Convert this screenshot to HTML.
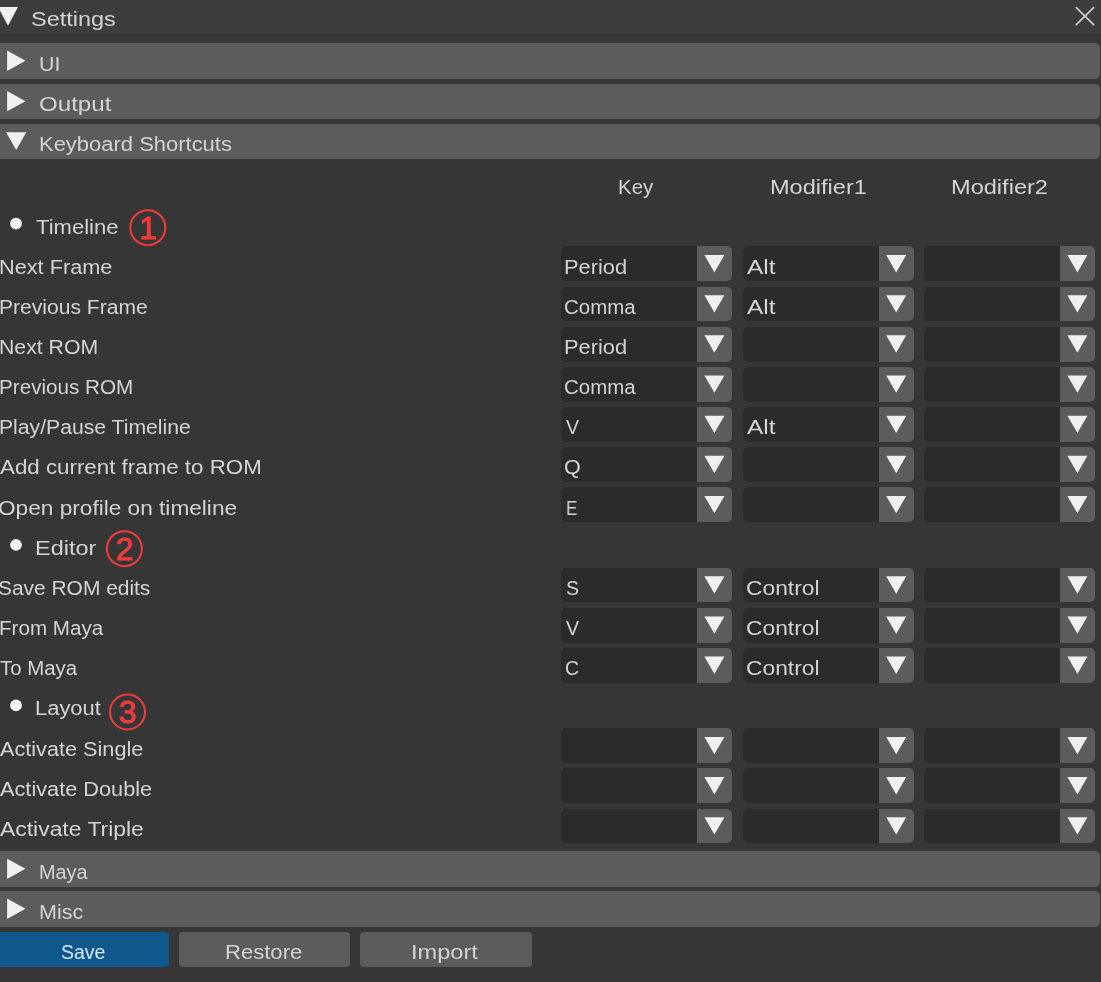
<!DOCTYPE html><html><head><meta charset="utf-8"><style>
html,body{margin:0;padding:0;}
body{width:1101px;height:982px;position:relative;overflow:hidden;background:#363636;font-family:"Liberation Sans",sans-serif;font-size:19.5px;}
.a{position:absolute;}
.t{position:absolute;white-space:pre;will-change:transform;line-height:60px;height:60px;transform-origin:0 0;}
.hd{position:absolute;left:-10px;width:1110px;height:36px;background:#5c5c5c;border-radius:5px;}
.cb{position:absolute;width:171.2px;height:34.8px;background:#2b2b2b;border-radius:5px;}
.cbb{position:absolute;width:35.4px;height:34.8px;background:#5c5c5c;border-radius:0 5px 5px 0;}
.bt{position:absolute;height:35px;background:#5c5c5c;border-radius:4px;}
</style></head><body>

<div class='a' style='left:0;top:0;width:1101px;height:33.3px;background:#3d3d3d'></div>
<div class='hd' style='top:42.8px;height:35.9px'></div>
<div class='hd' style='top:83.5px;height:35.4px'></div>
<div class='hd' style='top:123.8px;height:35.0px'></div>
<div class='hd' style='top:851.0px;height:35.7px'></div>
<div class='hd' style='top:890.9px;height:35.7px'></div>
<div class='cb' style='left:560.9px;top:246.40px'></div>
<div class='cbb' style='left:696.70px;top:246.40px'></div>
<div class='cb' style='left:742.7px;top:246.40px'></div>
<div class='cbb' style='left:878.50px;top:246.40px'></div>
<div class='cb' style='left:923.9px;top:246.40px'></div>
<div class='cbb' style='left:1059.70px;top:246.40px'></div>
<div class='cb' style='left:560.9px;top:286.56px'></div>
<div class='cbb' style='left:696.70px;top:286.56px'></div>
<div class='cb' style='left:742.7px;top:286.56px'></div>
<div class='cbb' style='left:878.50px;top:286.56px'></div>
<div class='cb' style='left:923.9px;top:286.56px'></div>
<div class='cbb' style='left:1059.70px;top:286.56px'></div>
<div class='cb' style='left:560.9px;top:326.71px'></div>
<div class='cbb' style='left:696.70px;top:326.71px'></div>
<div class='cb' style='left:742.7px;top:326.71px'></div>
<div class='cbb' style='left:878.50px;top:326.71px'></div>
<div class='cb' style='left:923.9px;top:326.71px'></div>
<div class='cbb' style='left:1059.70px;top:326.71px'></div>
<div class='cb' style='left:560.9px;top:366.87px'></div>
<div class='cbb' style='left:696.70px;top:366.87px'></div>
<div class='cb' style='left:742.7px;top:366.87px'></div>
<div class='cbb' style='left:878.50px;top:366.87px'></div>
<div class='cb' style='left:923.9px;top:366.87px'></div>
<div class='cbb' style='left:1059.70px;top:366.87px'></div>
<div class='cb' style='left:560.9px;top:407.03px'></div>
<div class='cbb' style='left:696.70px;top:407.03px'></div>
<div class='cb' style='left:742.7px;top:407.03px'></div>
<div class='cbb' style='left:878.50px;top:407.03px'></div>
<div class='cb' style='left:923.9px;top:407.03px'></div>
<div class='cbb' style='left:1059.70px;top:407.03px'></div>
<div class='cb' style='left:560.9px;top:447.18px'></div>
<div class='cbb' style='left:696.70px;top:447.18px'></div>
<div class='cb' style='left:742.7px;top:447.18px'></div>
<div class='cbb' style='left:878.50px;top:447.18px'></div>
<div class='cb' style='left:923.9px;top:447.18px'></div>
<div class='cbb' style='left:1059.70px;top:447.18px'></div>
<div class='cb' style='left:560.9px;top:487.34px'></div>
<div class='cbb' style='left:696.70px;top:487.34px'></div>
<div class='cb' style='left:742.7px;top:487.34px'></div>
<div class='cbb' style='left:878.50px;top:487.34px'></div>
<div class='cb' style='left:923.9px;top:487.34px'></div>
<div class='cbb' style='left:1059.70px;top:487.34px'></div>
<div class='cb' style='left:560.9px;top:567.66px'></div>
<div class='cbb' style='left:696.70px;top:567.66px'></div>
<div class='cb' style='left:742.7px;top:567.66px'></div>
<div class='cbb' style='left:878.50px;top:567.66px'></div>
<div class='cb' style='left:923.9px;top:567.66px'></div>
<div class='cbb' style='left:1059.70px;top:567.66px'></div>
<div class='cb' style='left:560.9px;top:607.81px'></div>
<div class='cbb' style='left:696.70px;top:607.81px'></div>
<div class='cb' style='left:742.7px;top:607.81px'></div>
<div class='cbb' style='left:878.50px;top:607.81px'></div>
<div class='cb' style='left:923.9px;top:607.81px'></div>
<div class='cbb' style='left:1059.70px;top:607.81px'></div>
<div class='cb' style='left:560.9px;top:647.97px'></div>
<div class='cbb' style='left:696.70px;top:647.97px'></div>
<div class='cb' style='left:742.7px;top:647.97px'></div>
<div class='cbb' style='left:878.50px;top:647.97px'></div>
<div class='cb' style='left:923.9px;top:647.97px'></div>
<div class='cbb' style='left:1059.70px;top:647.97px'></div>
<div class='cb' style='left:560.9px;top:728.28px'></div>
<div class='cbb' style='left:696.70px;top:728.28px'></div>
<div class='cb' style='left:742.7px;top:728.28px'></div>
<div class='cbb' style='left:878.50px;top:728.28px'></div>
<div class='cb' style='left:923.9px;top:728.28px'></div>
<div class='cbb' style='left:1059.70px;top:728.28px'></div>
<div class='cb' style='left:560.9px;top:768.44px'></div>
<div class='cbb' style='left:696.70px;top:768.44px'></div>
<div class='cb' style='left:742.7px;top:768.44px'></div>
<div class='cbb' style='left:878.50px;top:768.44px'></div>
<div class='cb' style='left:923.9px;top:768.44px'></div>
<div class='cbb' style='left:1059.70px;top:768.44px'></div>
<div class='cb' style='left:560.9px;top:808.60px'></div>
<div class='cbb' style='left:696.70px;top:808.60px'></div>
<div class='cb' style='left:742.7px;top:808.60px'></div>
<div class='cbb' style='left:878.50px;top:808.60px'></div>
<div class='cb' style='left:923.9px;top:808.60px'></div>
<div class='cbb' style='left:1059.70px;top:808.60px'></div>
<div class='bt' style='left:-4px;width:173.4px;top:931.8px;background:#10588c'></div>
<div class='bt' style='left:178.7px;width:171.6px;top:931.8px'></div>
<div class='bt' style='left:360.3px;width:171.3px;top:931.8px'></div>
<svg class='a' style='left:0;top:0' width='1101' height='982'><polygon points='-2,7 18,7 8,25.7' fill='#f0f0f0'/><polygon points='7.1,50.60 25.5,60.75 7.1,70.90' fill='#f0f0f0'/><polygon points='7.1,91.05 25.5,101.20 7.1,111.35' fill='#f0f0f0'/><polygon points='6.1,132.30 26.3,132.30 16.2,150.10' fill='#f0f0f0'/><polygon points='7.1,858.70 25.5,868.85 7.1,879.00' fill='#f0f0f0'/><polygon points='7.1,898.60 25.5,908.75 7.1,918.90' fill='#f0f0f0'/><polygon points='704.40,255.00 724.40,255.00 714.40,272.40' fill='#f0f0f0'/><polygon points='886.20,255.00 906.20,255.00 896.20,272.40' fill='#f0f0f0'/><polygon points='1067.40,255.00 1087.40,255.00 1077.40,272.40' fill='#f0f0f0'/><polygon points='704.40,295.16 724.40,295.16 714.40,312.56' fill='#f0f0f0'/><polygon points='886.20,295.16 906.20,295.16 896.20,312.56' fill='#f0f0f0'/><polygon points='1067.40,295.16 1087.40,295.16 1077.40,312.56' fill='#f0f0f0'/><polygon points='704.40,335.31 724.40,335.31 714.40,352.71' fill='#f0f0f0'/><polygon points='886.20,335.31 906.20,335.31 896.20,352.71' fill='#f0f0f0'/><polygon points='1067.40,335.31 1087.40,335.31 1077.40,352.71' fill='#f0f0f0'/><polygon points='704.40,375.47 724.40,375.47 714.40,392.87' fill='#f0f0f0'/><polygon points='886.20,375.47 906.20,375.47 896.20,392.87' fill='#f0f0f0'/><polygon points='1067.40,375.47 1087.40,375.47 1077.40,392.87' fill='#f0f0f0'/><polygon points='704.40,415.63 724.40,415.63 714.40,433.03' fill='#f0f0f0'/><polygon points='886.20,415.63 906.20,415.63 896.20,433.03' fill='#f0f0f0'/><polygon points='1067.40,415.63 1087.40,415.63 1077.40,433.03' fill='#f0f0f0'/><polygon points='704.40,455.78 724.40,455.78 714.40,473.18' fill='#f0f0f0'/><polygon points='886.20,455.78 906.20,455.78 896.20,473.18' fill='#f0f0f0'/><polygon points='1067.40,455.78 1087.40,455.78 1077.40,473.18' fill='#f0f0f0'/><polygon points='704.40,495.94 724.40,495.94 714.40,513.34' fill='#f0f0f0'/><polygon points='886.20,495.94 906.20,495.94 896.20,513.34' fill='#f0f0f0'/><polygon points='1067.40,495.94 1087.40,495.94 1077.40,513.34' fill='#f0f0f0'/><polygon points='704.40,576.26 724.40,576.26 714.40,593.66' fill='#f0f0f0'/><polygon points='886.20,576.26 906.20,576.26 896.20,593.66' fill='#f0f0f0'/><polygon points='1067.40,576.26 1087.40,576.26 1077.40,593.66' fill='#f0f0f0'/><polygon points='704.40,616.41 724.40,616.41 714.40,633.81' fill='#f0f0f0'/><polygon points='886.20,616.41 906.20,616.41 896.20,633.81' fill='#f0f0f0'/><polygon points='1067.40,616.41 1087.40,616.41 1077.40,633.81' fill='#f0f0f0'/><polygon points='704.40,656.57 724.40,656.57 714.40,673.97' fill='#f0f0f0'/><polygon points='886.20,656.57 906.20,656.57 896.20,673.97' fill='#f0f0f0'/><polygon points='1067.40,656.57 1087.40,656.57 1077.40,673.97' fill='#f0f0f0'/><polygon points='704.40,736.88 724.40,736.88 714.40,754.28' fill='#f0f0f0'/><polygon points='886.20,736.88 906.20,736.88 896.20,754.28' fill='#f0f0f0'/><polygon points='1067.40,736.88 1087.40,736.88 1077.40,754.28' fill='#f0f0f0'/><polygon points='704.40,777.04 724.40,777.04 714.40,794.44' fill='#f0f0f0'/><polygon points='886.20,777.04 906.20,777.04 896.20,794.44' fill='#f0f0f0'/><polygon points='1067.40,777.04 1087.40,777.04 1077.40,794.44' fill='#f0f0f0'/><polygon points='704.40,817.20 724.40,817.20 714.40,834.60' fill='#f0f0f0'/><polygon points='886.20,817.20 906.20,817.20 896.20,834.60' fill='#f0f0f0'/><polygon points='1067.40,817.20 1087.40,817.20 1077.40,834.60' fill='#f0f0f0'/><circle cx='16' cy='223.54' r='5.9' fill='#f0f0f0'/><circle cx='16' cy='544.80' r='5.9' fill='#f0f0f0'/><circle cx='16' cy='705.43' r='5.9' fill='#f0f0f0'/><line x1='1076.3' y1='7.7' x2='1093.6' y2='24.6' stroke='#cdcdcd' stroke-width='1.7' stroke-linecap='round'/><line x1='1093.6' y1='7.7' x2='1076.3' y2='24.6' stroke='#cdcdcd' stroke-width='1.7' stroke-linecap='round'/><circle cx='147.8' cy='227.7' r='17.5' fill='none' stroke='#ee3b3b' stroke-width='2.1'/><text x='147.8' y='238.89999999999998' text-anchor='middle' font-family='Liberation Sans' font-size='32' fill='#ee3b3b' stroke='#ee3b3b' stroke-width='0.8'>1</text><circle cx='124.4' cy='548.7' r='17.5' fill='none' stroke='#ee3b3b' stroke-width='2.1'/><text x='124.4' y='559.9000000000001' text-anchor='middle' font-family='Liberation Sans' font-size='32' fill='#ee3b3b' stroke='#ee3b3b' stroke-width='0.8'>2</text><circle cx='127.5' cy='712' r='17.5' fill='none' stroke='#ee3b3b' stroke-width='2.1'/><text x='127.5' y='723.2' text-anchor='middle' font-family='Liberation Sans' font-size='32' fill='#ee3b3b' stroke='#ee3b3b' stroke-width='0.8'>3</text></svg>
<div class='t' style='left:30.60px;top:-10.70px;color:#d4d4d4;transform:scaleX(1.2043)'>Settings</div>
<div class='t' style='left:39.41px;top:33.70px;color:#d4d4d4;transform:scaleX(1.0941)'>UI</div>
<div class='t' style='left:39.26px;top:73.90px;color:#d4d4d4;transform:scaleX(1.2362)'>Output</div>
<div class='t' style='left:39.37px;top:114.00px;color:#d4d4d4;transform:scaleX(1.1265)'>Keyboard Shortcuts</div>
<div class='t' style='left:39.48px;top:842.00px;color:#d4d4d4;transform:scaleX(1.0191)'>Maya</div>
<div class='t' style='left:39.40px;top:881.80px;color:#d4d4d4;transform:scaleX(1.1026)'>Misc</div>
<div class='t' style='left:617.95px;top:157.00px;color:#d4d4d4;transform:scaleX(1.0485)'>Key</div>
<div class='t' style='left:769.69px;top:157.00px;color:#d4d4d4;transform:scaleX(1.2076)'>Modifier1</div>
<div class='t' style='left:950.79px;top:157.00px;color:#d4d4d4;transform:scaleX(1.2089)'>Modifier2</div>
<div class='t' style='left:36.30px;top:196.54px;color:#d4d4d4;transform:scaleX(1.1306)'>Timeline</div>
<div class='t' style='left:34.60px;top:517.80px;color:#d4d4d4;transform:scaleX(1.2040)'>Editor</div>
<div class='t' style='left:34.68px;top:678.43px;color:#d4d4d4;transform:scaleX(1.1241)'>Layout</div>
<div class='t' style='left:-1.11px;top:236.70px;color:#d4d4d4;transform:scaleX(1.1130)'>Next Frame</div>
<div class='t' style='left:-1.08px;top:276.86px;color:#d4d4d4;transform:scaleX(1.0809)'>Previous Frame</div>
<div class='t' style='left:-1.09px;top:317.01px;color:#d4d4d4;transform:scaleX(1.0899)'>Next ROM</div>
<div class='t' style='left:-1.06px;top:357.17px;color:#d4d4d4;transform:scaleX(1.0592)'>Previous ROM</div>
<div class='t' style='left:-1.09px;top:397.33px;color:#d4d4d4;transform:scaleX(1.0857)'>Play/Pause Timeline</div>
<div class='t' style='left:0.00px;top:437.48px;color:#d4d4d4;transform:scaleX(1.1447)'>Add current frame to ROM</div>
<div class='t' style='left:-1.96px;top:477.64px;color:#d4d4d4;transform:scaleX(1.1608)'>Open profile on timeline</div>
<div class='t' style='left:-1.87px;top:557.96px;color:#d4d4d4;transform:scaleX(1.0730)'>Save ROM edits</div>
<div class='t' style='left:-1.06px;top:598.11px;color:#d4d4d4;transform:scaleX(1.0571)'>From Maya</div>
<div class='t' style='left:0.00px;top:638.27px;color:#d4d4d4;transform:scaleX(1.0473)'>To Maya</div>
<div class='t' style='left:0.00px;top:718.58px;color:#d4d4d4;transform:scaleX(1.1109)'>Activate Single</div>
<div class='t' style='left:0.00px;top:758.74px;color:#d4d4d4;transform:scaleX(1.1140)'>Activate Double</div>
<div class='t' style='left:0.00px;top:798.90px;color:#d4d4d4;transform:scaleX(1.1746)'>Activate Triple</div>
<div class='t' style='left:564.38px;top:236.70px;color:#d4d4d4;transform:scaleX(1.1200)'>Period</div>
<div class='t' style='left:747.30px;top:236.70px;color:#d4d4d4;transform:scaleX(1.2522)'>Alt</div>
<div class='t' style='left:564.45px;top:276.86px;color:#d4d4d4;transform:scaleX(1.0485)'>Comma</div>
<div class='t' style='left:747.30px;top:276.86px;color:#d4d4d4;transform:scaleX(1.2522)'>Alt</div>
<div class='t' style='left:564.38px;top:317.01px;color:#d4d4d4;transform:scaleX(1.1200)'>Period</div>
<div class='t' style='left:564.45px;top:357.17px;color:#d4d4d4;transform:scaleX(1.0485)'>Comma</div>
<div class='t' style='left:565.50px;top:397.33px;color:#d4d4d4;transform:scaleX(1.0077)'>V</div>
<div class='t' style='left:747.30px;top:397.33px;color:#d4d4d4;transform:scaleX(1.2522)'>Alt</div>
<div class='t' style='left:564.39px;top:437.48px;color:#d4d4d4;transform:scaleX(1.1071)'>Q</div>
<div class='t' style='left:565.62px;top:477.64px;color:#d4d4d4;transform:scaleX(0.8750)'>E</div>
<div class='t' style='left:565.50px;top:557.96px;color:#d4d4d4;transform:scaleX(1.0000)'>S</div>
<div class='t' style='left:746.13px;top:557.96px;color:#d4d4d4;transform:scaleX(1.1689)'>Control</div>
<div class='t' style='left:565.50px;top:598.11px;color:#d4d4d4;transform:scaleX(1.0077)'>V</div>
<div class='t' style='left:746.13px;top:598.11px;color:#d4d4d4;transform:scaleX(1.1689)'>Control</div>
<div class='t' style='left:564.50px;top:638.27px;color:#d4d4d4;transform:scaleX(1.0000)'>C</div>
<div class='t' style='left:746.13px;top:638.27px;color:#d4d4d4;transform:scaleX(1.1689)'>Control</div>
<div class='t' style='left:60.50px;top:922.30px;color:#d6e8f8;transform:scaleX(0.9977)'>Save</div>
<div class='t' style='left:224.87px;top:922.30px;color:#d4d4d4;transform:scaleX(1.1313)'>Restore</div>
<div class='t' style='left:411.29px;top:922.30px;color:#d4d4d4;transform:scaleX(1.2111)'>Import</div>
</body></html>
